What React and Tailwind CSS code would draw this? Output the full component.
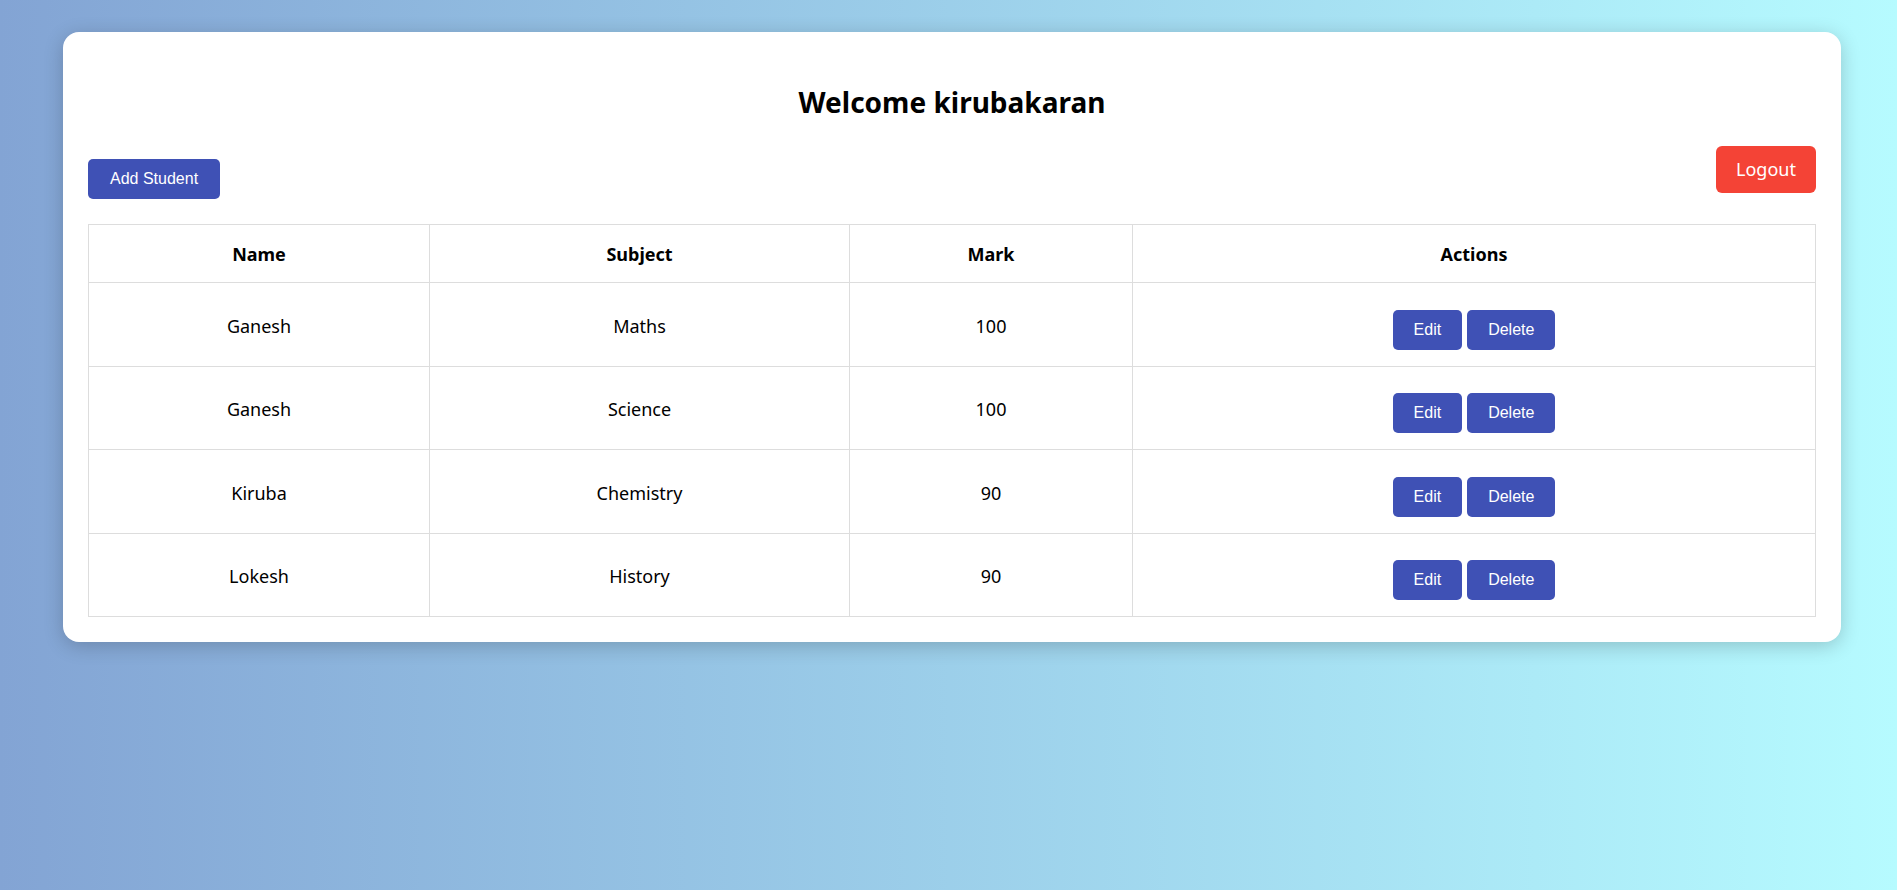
// Ogrenci paneli: hosgeldin basligi, ekle/cikis butonlari ve not tablosu.
const ogrenciler = [
  { ad: "Ganesh", ders: "Maths", not: 100 },
  { ad: "Ganesh", ders: "Science", not: 100 },
  { ad: "Kiruba", ders: "Chemistry", not: 90 },
  { ad: "Lokesh", ders: "History", not: 90 },
];

const btn =
  "h-[40px] rounded-[5px] bg-[#3f51b5] text-white text-[16px] font-['Liberation_Sans',Arial,sans-serif]";

function App() {
  return (
    <div className="min-h-screen bg-gradient-to-r from-[#83a4d4] to-[#b6fbff] pt-[32px] font-['Noto_Sans',sans-serif] text-black">
      <div className="ml-[63px] w-[1778px] bg-white rounded-[16px] shadow-[0_4px_20px_rgba(0,0,0,0.2)] px-[25px] pb-[25px] pt-[25px]">
        <h2 className="mt-[27px] text-center text-[28px] leading-[36px] font-bold">Welcome kirubakaran</h2>

        <div className="mt-[26px] flex justify-between items-start">
          <button className={btn + " px-[22px] mt-[13px]"}>Add Student</button>
          <button className="w-[100px] h-[47px] rounded-[6px] bg-[#f44336] text-white text-[18px]">Logout</button>
        </div>

        <table className="mt-[25px] w-full border-collapse text-[18px]">
          <thead>
            <tr>
              <th className="w-[341px] h-[58px] pt-[2px] border border-[#ddd] font-bold">Name</th>
              <th className="w-[420px] h-[58px] pt-[2px] border border-[#ddd] font-bold">Subject</th>
              <th className="w-[283px] h-[58px] pt-[2px] border border-[#ddd] font-bold">Mark</th>
              <th className="h-[58px] pt-[2px] border border-[#ddd] font-bold">Actions</th>
            </tr>
          </thead>
          <tbody>
            {ogrenciler.map((o, i) => (
              <tr key={i}>
                <td className="h-[83.5px] pt-[4px] border border-[#ddd] text-center">{o.ad}</td>
                <td className="h-[83.5px] pt-[4px] border border-[#ddd] text-center">{o.ders}</td>
                <td className="h-[83.5px] pt-[4px] border border-[#ddd] text-center">{o.not}</td>
                <td className="h-[83.5px] pt-[4px] border border-[#ddd] text-center">
                  <div className="flex justify-center gap-[5px] pt-[7px]">
                    <button className={btn + " px-[21px]"}>Edit</button>
                    <button className={btn + " px-[21px]"}>Delete</button>
                  </div>
                </td>
              </tr>
            ))}
          </tbody>
        </table>
      </div>
    </div>
  );
}

export default App;
